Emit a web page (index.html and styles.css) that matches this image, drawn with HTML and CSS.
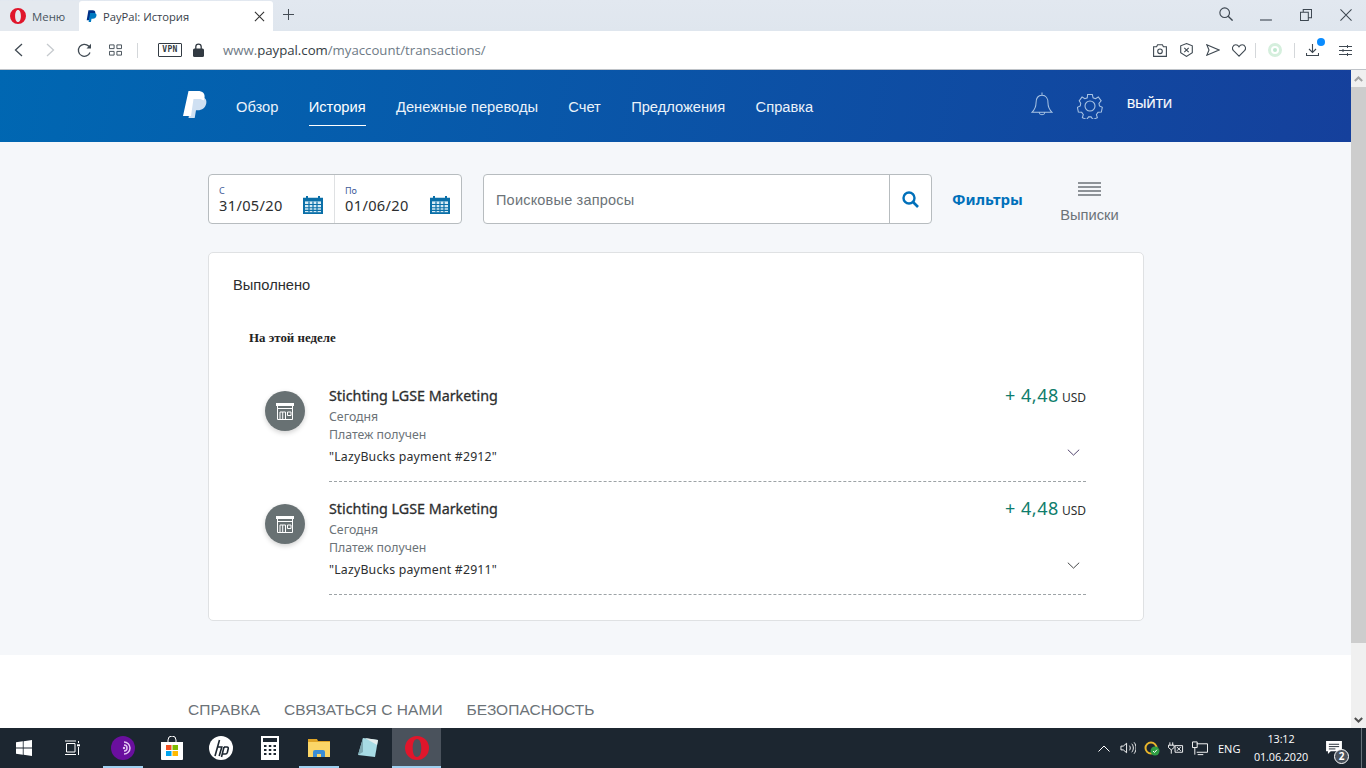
FILE: index.html
```html
<!DOCTYPE html>
<html lang="ru">
<head>
<meta charset="utf-8">
<title>PayPal: История</title>
<link rel="stylesheet" href="styles.css">
</head>
<body>
<div class="tabbar">
  <div class="menu-tab">
    <svg class="opera-sm" viewBox="0 0 16 16"><path fill="#e0162b" fill-rule="evenodd" d="M8 0a8 8 0 1 0 0 16A8 8 0 0 0 8 0zm0 2c1.9 0 2.9 2.7 2.9 6s-1 6-2.9 6-2.9-2.7-2.9-6S6.100 2 8 2z"/></svg>
    <span>Меню</span>
  </div>
  <div class="tab">
    <svg class="pp-fav" viewBox="0 0 16 18"><path fill="#003087" d="M3.500 0h6c3 0 4.500 1.600 4 4.300-.5 3-2.700 4.700-5.700 4.700H6L5 14.500H1z"/><path fill="#0079c1" d="M6 4h5.500c2.800 0 4.200 1.400 3.700 3.900-.5 2.800-2.500 4.300-5.200 4.300H8L7.200 17H3.800z"/></svg>
    <span class="tab-title">PayPal: История</span>
    <svg class="tab-x" viewBox="0 0 12 12"><path d="M1 1l10 10M11 1L1 11" stroke="#333" stroke-width="1.200" fill="none"/></svg>
  </div>
  <svg class="tab-plus" viewBox="0 0 12 12"><path d="M6 0v12M0 6h12" stroke="#444c55" stroke-width="1.100" fill="none"/></svg>
  <div class="win-ctl">
    <svg class="w-search" viewBox="0 0 16 16"><circle cx="6.500" cy="6.500" r="5.500" stroke="#3c4650" stroke-width="1.300" fill="none"/><path d="M10.500 10.500l5 5" stroke="#3c4650" stroke-width="1.600"/></svg>
    <svg class="w-min" viewBox="0 0 12 2"><path d="M0 1h12" stroke="#3c4650" stroke-width="1.100"/></svg>
    <svg class="w-max" viewBox="0 0 13 13"><path d="M.5 3.500h8.500v9H.500zM3.500 3.500V.5h9v9H9" stroke="#3c4650" stroke-width="1.100" fill="none"/></svg>
    <svg class="w-close" viewBox="0 0 13 13"><path d="M.5.5l12 12M12.500.5l-12 12" stroke="#3c4650" stroke-width="1.100" fill="none"/></svg>
  </div>
</div>
<div class="toolbar">
  <svg class="t-back" viewBox="0 0 9 14"><path d="M8 1L1.500 7 8 13" stroke="#3f4952" stroke-width="1.300" fill="none"/></svg>
  <svg class="t-fwd" viewBox="0 0 9 14"><path d="M1 1l6.500 6L1 13" stroke="#c6cace" stroke-width="1.300" fill="none"/></svg>
  <svg class="t-reload" viewBox="0 0 15 15"><path d="M13 9.500A6 6 0 1 1 11.600 3l1.800 1.500" stroke="#3f4952" stroke-width="1.300" fill="none"/><path d="M14 .8V5.500H9.500z" fill="#3f4952"/></svg>
  <svg class="t-grid" viewBox="0 0 14 12"><path d="M.5.500h5v4h-5zM8.500.500h5v4h-5zM.5 7.500h5v4h-5zM8.500 7.500h5v4h-5z" stroke="#3f4952" fill="none"/></svg>
  <span class="t-sep"></span>
  <span class="vpn">VPN</span>
  <svg class="t-lock" viewBox="0 0 11 14"><path d="M2.800 6V3.800a2.700 2.700 0 0 1 5.400 0V6" stroke="#323a42" stroke-width="1.300" fill="none"/><rect y="5.500" width="11" height="8.500" rx="1.500" fill="#323a42"/></svg>
  <div class="url"><span class="u-dim">www.</span><span class="u-dark">paypal.com</span><span class="u-dim">/myaccount/transactions/</span></div>
  <div class="t-right">
    <svg class="i-cam" viewBox="0 0 14 13"><path d="M.6 2.800h3l1-2h4.800l1 2h3v9.600H.6z" stroke="#3f4952" stroke-width="1.100" fill="none"/><circle cx="7" cy="7.300" r="2.300" stroke="#3f4952" stroke-width="1.100" fill="none"/></svg>
    <svg class="i-shield" viewBox="0 0 13 14"><path d="M6.500.6l5.800 2.200v7L6.500 13.400.7 9.800v-7z" stroke="#3f4952" stroke-width="1.100" fill="none"/><path d="M4.300 4.800l4.400 4.400M8.700 4.800L4.300 9.200" stroke="#3f4952" stroke-width="1.100"/></svg>
    <svg class="i-send" viewBox="0 0 14 12"><path d="M.8.800L13 6 .8 11.200 3 6z" stroke="#3f4952" stroke-width="1.100" fill="none"/></svg>
    <svg class="i-heart" viewBox="0 0 14 13"><path d="M7 12.200L1.500 6.700C-.7 4.300 1 .8 3.800.8 5.200.8 6.300 1.600 7 2.800 7.700 1.600 8.800.8 10.200.8c2.800 0 4.500 3.500 2.300 5.900z" stroke="#3f4952" stroke-width="1.100" fill="none"/></svg>
    <span class="t-sep2"></span>
    <svg class="i-ring" viewBox="0 0 14 14"><circle cx="7" cy="7" r="5.500" stroke="#d5efdd" stroke-width="3" fill="none"/><circle cx="7" cy="7" r="2" fill="#bfe8cf"/></svg>
    <span class="t-sep3"></span>
    <div class="dl-wrap">
      <svg class="i-dl" viewBox="0 0 13 12"><path d="M6.500 0v8M3 5l3.500 3.500L10 5M.5 9v2.500h12V9" stroke="#3f4952" stroke-width="1.100" fill="none"/></svg>
      <span class="dl-dot"></span>
    </div>
    <svg class="i-set" viewBox="0 0 13 11"><path d="M0 1.500h13M0 5.500h13M0 9.500h13" stroke="#3f4952"/><path d="M8.500 0v3M4 4v3M8.500 8v3" stroke="#3f4952"/></svg>
  </div>
</div>
<div class="viewport">
  <div class="page">
    <header class="pp-head">
      <svg class="pp-logo" viewBox="0 0 24 28"><path fill="#cfe0f2" d="M9 6h8.500c4.300 0 6.500 2.400 5.800 6.200-.8 4.500-4.200 7-8.600 7H13L11.700 27H5.500z"/><path fill="#fff" d="M5.500 0h9.300c4.800 0 7.500 2.600 6.700 7-.2 1-.6 1.900-1 2.600-1-1-2.400-1.600-4.500-1.600H10.500L8 25H0z"/></svg>
      <nav class="nav">
        <a>Обзор</a>
        <a class="active">История</a>
        <a>Денежные переводы</a>
        <a>Счет</a>
        <a>Предложения</a>
        <a>Справка</a>
      </nav>
      <svg class="h-bell" viewBox="0 0 24 26"><path d="M12 0v3M12 3c-4.500 0-6.500 3.500-6.500 8 0 4-1 7-4.500 10.500h22C19.500 18 18.500 15 18.500 11c0-4.500-2-8-6.500-8zM9 22c.5 3 5.500 3 6 0" stroke="#a9c4e4" stroke-width="1.100" fill="none"/></svg>
      <svg class="h-gear" viewBox="0 0 26 26"><circle cx="13" cy="13" r="5" stroke="#a9c4e4" stroke-width="1.100" fill="none"/><path d="M10.500 1h5l.8 3.400 2.500 1 3-1.800 3 4-2.300 2.600.5 2.800 3 1.500-1 4.900-3.500.3-1.700 2.300 1 3.300-4.600 2-2-2.800h-2.600l-2 2.800-4.600-2 1-3.300-1.700-2.300-3.500-.3-1-4.900 3-1.500.5-2.800L1.700 7.600l3-4 3 1.800 2.500-1z" transform="translate(.6 .6) scale(.95)" stroke="#a9c4e4" stroke-width="1.100" fill="none"/></svg>
      <a class="logout">ВЫЙТИ</a>
    </header>
    <main class="content">
      <div class="filters">
        <div class="dates">
          <div class="date-cell">
            <div class="date-text"><span class="date-label">С</span><span class="date-val">31/05/20</span></div>
            <svg class="cal" viewBox="0 0 20 20" preserveAspectRatio="none"><path fill="#0a6fa8" d="M0 2h3V0h2v2h10V0h2v2h3v18H0z"/><path fill="#d7ebf5" d="M2 6h16v12H2z"/><path stroke="#0a6fa8" stroke-width="1.200" d="M2 9.500h16M2 13h16M2 16h16M6 6v12M10 6v12M14 6v12"/></svg>
          </div>
          <div class="date-cell second">
            <div class="date-text"><span class="date-label">По</span><span class="date-val">01/06/20</span></div>
            <svg class="cal" viewBox="0 0 20 20" preserveAspectRatio="none"><path fill="#0a6fa8" d="M0 2h3V0h2v2h10V0h2v2h3v18H0z"/><path fill="#d7ebf5" d="M2 6h16v12H2z"/><path stroke="#0a6fa8" stroke-width="1.200" d="M2 9.500h16M2 13h16M2 16h16M6 6v12M10 6v12M14 6v12"/></svg>
          </div>
        </div>
        <div class="search">
          <span class="search-ph">Поисковые запросы</span>
          <span class="search-btn"><svg viewBox="0 0 17 17"><circle cx="7" cy="7" r="5.500" stroke="#0070ba" stroke-width="2.400" fill="none"/><path d="M11 11l5 5" stroke="#0070ba" stroke-width="2.600"/></svg></span>
        </div>
        <a class="filter-link">Фильтры</a>
        <div class="statements">
          <svg viewBox="0 0 23 14"><path d="M0 1h23M0 5h23M0 9h23M0 13h23" stroke="#6c7378" stroke-width="1.300"/></svg>
          <span>Выписки</span>
        </div>
      </div>
      <section class="card">
        <h2 class="card-title">Выполнено</h2>
        <h3 class="week">На этой неделе</h3>
        <ul class="tx-list">
          <li class="tx">
            <span class="tx-ico"><svg viewBox="0 0 18 18"><path d="M0 1h18v3H0z" fill="#fff"/><path d="M1.500 4v13.500h15V4M1 6.500h16M4 17V10h5.500v7M6.700 10v7M11.500 10h3.500v3.500h-3.500z" stroke="#fff" fill="none"/></svg></span>
            <div class="tx-main">
              <div class="tx-row">
                <div class="tx-info">
                  <div class="tx-name">Stichting LGSE Marketing</div>
                  <div class="tx-sub">Сегодня</div>
                  <div class="tx-sub second">Платеж получен</div>
                  <div class="tx-note">"LazyBucks payment #2912"</div>
                </div>
                <div class="tx-side">
                  <div class="tx-amt"><span class="plus">+ 4,48</span> <span class="cur">USD</span></div>
                  <svg class="chev" viewBox="0 0 14 8"><path d="M.5.800L7 7 13.500.8" stroke="#3a2a5a" fill="none"/></svg>
                </div>
              </div>
            </div>
          </li>
          <li class="tx">
            <span class="tx-ico"><svg viewBox="0 0 18 18"><path d="M0 1h18v3H0z" fill="#fff"/><path d="M1.500 4v13.500h15V4M1 6.500h16M4 17V10h5.500v7M6.700 10v7M11.500 10h3.500v3.500h-3.500z" stroke="#fff" fill="none"/></svg></span>
            <div class="tx-main">
              <div class="tx-row">
                <div class="tx-info">
                  <div class="tx-name">Stichting LGSE Marketing</div>
                  <div class="tx-sub">Сегодня</div>
                  <div class="tx-sub second">Платеж получен</div>
                  <div class="tx-note">"LazyBucks payment #2911"</div>
                </div>
                <div class="tx-side">
                  <div class="tx-amt"><span class="plus">+ 4,48</span> <span class="cur">USD</span></div>
                  <svg class="chev" viewBox="0 0 14 8"><path d="M.5.800L7 7 13.500.8" stroke="#2c2e2f" fill="none"/></svg>
                </div>
              </div>
            </div>
          </li>
        </ul>
      </section>
    </main>
    <footer class="foot">
      <a>СПРАВКА</a><a>СВЯЗАТЬСЯ С НАМИ</a><a>БЕЗОПАСНОСТЬ</a>
    </footer>
  </div>
  <div class="scrollbar">
    <span class="sb-btn"><svg viewBox="0 0 9 6"><path d="M.8 5L4.500 1.500 8.200 5" stroke="#a3a3a3" stroke-width="2" fill="none"/></svg></span>
    <span class="thumb"></span>
    <span class="sb-btn sb-down"><svg viewBox="0 0 9 6"><path d="M.8 1L4.500 4.500 8.200 1" stroke="#505050" stroke-width="2" fill="none"/></svg></span>
  </div>
</div>
<div class="taskbar">
  <svg class="tb-win" viewBox="0 0 16 16"><path fill="#fff" d="M0 2.300l6.800-1v6.300H0zM7.600 1.200L16 0v7.600H7.600zM0 8.400h6.800v6.300L0 13.700zM7.600 8.400H16V16l-8.400-1.200z"/></svg>
  <svg class="tb-view" viewBox="0 0 16 16"><path d="M2.500 3.500h8.500v8.500H2.500zM1 1h11M1 14.500h11M14.500 1v2M14.500 7v8" stroke="#fff" fill="none"/><rect x="13" y="4.300" width="3" height="2" fill="#fff"/></svg>
  <span class="tb-slot s-tor active-line"><svg viewBox="0 0 24 24"><circle cx="12" cy="12" r="12" fill="#6a0f9e"/><path d="M13 6a6 6 0 0 1 0 12M13 9a3 3 0 0 1 0 6" stroke="#e3c8f2" stroke-width="1.500" fill="none"/><circle cx="13" cy="12" r="1.200" fill="#e3c8f2"/></svg></span>
  <span class="tb-slot s-store"><svg viewBox="0 0 24 24"><path d="M8 7V4a4 4 0 0 1 8 0v3" stroke="#fff" fill="none"/><path d="M1 6h22v17a1 1 0 0 1-1 1H2a1 1 0 0 1-1-1z" fill="#fff"/><path fill="#f25022" d="M6 9h5.500v5H6z"/><path fill="#7fba00" d="M12.500 9H18v5h-5.500z"/><path fill="#00a4ef" d="M6 15h5.500v5H6z"/><path fill="#ffb900" d="M12.500 15H18v5h-5.500z"/></svg></span>
  <span class="tb-slot s-hp"><svg viewBox="0 0 24 24"><circle cx="12" cy="12" r="12" fill="#fff"/><path d="M10.500 4L6 20M8.700 11h4.100L10.200 20M15 11h3c1 0 1.500.7 1.200 1.800l-.8 3.400c-.3 1-1 1.800-2 1.800h-2.500M15 11l-2.500 10" stroke="#1c2630" stroke-width="1.600" fill="none"/></svg></span>
  <span class="tb-slot s-calc"><svg viewBox="0 0 18 24"><path fill="#fff" d="M0 0h18v24H0z"/><path fill="#1c2630" d="M2 2h14v4H2zM3 9h2.500v2H3zM7.800 9h2.500v2H7.800zM12.500 9H15v2h-2.500zM3 13h2.500v2H3zM7.800 13h2.500v2H7.800zM12.500 13H15v2h-2.500zM3 17h2.500v2H3zM7.800 17h2.500v2H7.800zM12.500 17H15v2h-2.500z"/></svg></span>
  <span class="tb-slot s-files active-line"><svg viewBox="0 0 22 20"><path fill="#e0a526" d="M0 1h9l1 2h12v4H0z"/><path fill="#fbd667" d="M0 4h22v15H0z"/><path fill="#3b8ed6" d="M5 19v-5a2 2 0 0 1 2-2h8a2 2 0 0 1 2 2v5h-4v-3H9v3z"/></svg></span>
  <span class="tb-slot s-note"><svg viewBox="0 0 22 22"><path fill="#a7dbe4" d="M6 1l15 2-3 17L1 18z"/><path fill="#7ea9b2" d="M6 1L1 18l5-3z"/><path fill="#e4ecec" d="M8 1l13 2-1 5z"/></svg></span>
  <span class="tb-slot s-opera active-line is-open"><svg viewBox="0 0 24 24"><path fill="#e0162b" fill-rule="evenodd" d="M12 0a12 12 0 1 0 0 24 12 12 0 0 0 0-24zm0 3c2.900 0 4.300 4 4.300 9s-1.400 9-4.300 9-4.300-4-4.300-9 1.400-9 4.300-9z"/></svg></span>
  <div class="tray">
    <svg class="tr-up" viewBox="0 0 12 7"><path d="M.5 6.500L6 1l5.500 5.500" stroke="#fff" fill="none"/></svg>
    <svg class="tr-vol" viewBox="0 0 17 14"><path d="M1 5h2.500L7 2v10L3.500 9H1zM10 4.500c1.200 1.500 1.200 3.500 0 5M12.500 2.500c2.200 2.600 2.200 6.400 0 9M15 1c2.700 3.500 2.700 8.500 0 12" stroke="#fff" fill="none"/></svg>
    <svg class="tr-norton" viewBox="0 0 16 16"><circle cx="7" cy="8" r="5.500" stroke="#e9b52c" stroke-width="2" fill="none"/><circle cx="11" cy="11" r="4.500" fill="#2f9e44"/><path d="M9 11l1.500 1.500L13 9.700" stroke="#fff" fill="none"/></svg>
    <svg class="tr-power" viewBox="0 0 17 14"><path d="M2 1v3M5 1v3M.5 4h6v2.500L3.500 9 .5 6.500zM3.500 9v4" stroke="#fff" fill="none"/><path d="M7.500 4.500h8v7h-8zM9.500 6l4 4M13.500 6l-4 4" stroke="#fff" fill="none"/></svg>
    <svg class="tr-net" viewBox="0 0 17 15"><path d="M5 2.500h11.500v9H5M.5.500h5v6h-5zM3 6.500V14M6 14h6" stroke="#fff" fill="none"/></svg>
    <span class="tr-lang">ENG</span>
    <div class="tr-clock"><span>13:12</span><span>01.06.2020</span></div>
    <div class="tr-notif">
      <svg viewBox="0 0 17 15"><path fill="#fff" d="M0 0h17v11H5l-3 3v-3H0z"/><path stroke="#1c2630" d="M3 3.500h11M3 6h11M3 8.500h7"/></svg>
      <span class="tr-badge">2</span>
    </div>
    <span class="tr-desktop"></span>
  </div>
</div>
</body>
</html>
```
FILE: styles.css
```css
* { box-sizing: border-box; }
html, body { margin: 0; padding: 0; height: 768px; overflow: hidden; }
body { display: flex; flex-direction: column; width: 1366px; font-family: "Open Sans", sans-serif; background: #fff; }
svg { display: block; flex: none; }
ul { list-style: none; margin: 0; padding: 0; }
h2, h3 { margin: 0; font-weight: normal; }

/* browser tab strip */
.tabbar { height: 31px; flex: none; display: flex; align-items: flex-end; background: linear-gradient(#e2e8f0, #dfe6ee); position: relative; }
.menu-tab { width: 79px; height: 30px; display: flex; align-items: center; padding-left: 10px; gap: 6px; font-size: 11.400px; color: #4a5560; background: #e4e9ef; }
.opera-sm { width: 16px; height: 16px; }
.tab { width: 194px; height: 30px; background: #fff; border-radius: 3px 3px 0 0; display: flex; align-items: center; padding-left: 7px; font-size: 11.200px; color: #39424b; }
.pp-fav { width: 11px; height: 13px; margin-right: 6px; }
.tab-title { flex: 1; }
.tab-x { width: 11px; height: 11px; margin-right: 8px; }
.tab-plus { width: 11px; height: 11px; margin: 0 0 11px 10px; }
.win-ctl { margin-left: auto; height: 31px; position: relative; width: 150px; }
.w-search { width: 14px; height: 14px; position: absolute; left: 3px; top: 7px; }
.w-min { width: 12px; height: 2px; position: absolute; left: 44px; top: 19px; }
.w-max { width: 12px; height: 12px; position: absolute; left: 84px; top: 9px; }
.w-close { width: 12px; height: 12px; position: absolute; left: 124px; top: 9px; }

/* browser toolbar */
.toolbar { height: 39px; flex: none; display: flex; align-items: center; background: #fff; border-bottom: 1px solid #bfc3c8; padding-left: 14px; }
.t-back { width: 9px; height: 14px; }
.t-fwd { width: 9px; height: 14px; margin-left: 23px; }
.t-reload { width: 15px; height: 15px; margin-left: 22px; }
.t-grid { width: 13px; height: 12px; margin-left: 17px; }
.t-sep { width: 1px; height: 15px; background: #d4d7da; margin-left: 15px; }
.vpn { width: 24px; height: 14px; border: 1px solid #333b43; border-radius: 1px; margin-left: 20px; font: bold 8px/12px "DejaVu Sans Mono", monospace; letter-spacing: .3px; text-align: center; color: #333b43; }
.t-lock { width: 11px; height: 14px; margin-left: 11px; }
.url { margin-left: 19px; font-size: 13.200px; color: #6e7a86; }
.u-dark { color: #343c44; }
.t-right { margin-left: auto; display: flex; align-items: center; padding-right: 14px; }
.i-cam { width: 14px; height: 13px; }
.i-shield { width: 13px; height: 14px; margin-left: 13px; }
.i-send { width: 14px; height: 12px; margin-left: 13px; }
.i-heart { width: 14px; height: 13px; margin-left: 12px; }
.t-sep2 { width: 1px; height: 15px; background: #d4d7da; margin-left: 9px; }
.i-ring { width: 14px; height: 14px; margin-left: 12px; }
.t-sep3 { width: 1px; height: 15px; background: #d4d7da; margin-left: 12px; }
.dl-wrap { position: relative; margin-left: 11px; }
.i-dl { width: 13px; height: 12px; }
.dl-dot { position: absolute; width: 8px; height: 8px; border-radius: 50%; background: #0a8cff; left: 11px; top: -6px; }
.i-set { width: 13px; height: 11px; margin-left: 20px; }

/* page */
.viewport { flex: 1; display: flex; min-height: 0; overflow: hidden; }
.page { flex: 1; min-width: 0; display: flex; flex-direction: column; background: #f5f7fa; }
.pp-head { height: 72px; flex: none; display: flex; align-items: center; position: relative; background: linear-gradient(100deg, #0067b2, #15409c); padding-left: 183px; }
.pp-logo { width: 24px; height: 28px; margin-top: -2px; }
.nav { display: flex; margin-left: 29px; height: 100%; gap: 30.300px; font-family: "Liberation Sans", sans-serif; font-size: 14.700px; color: #eaf2fa; }
.nav a { display: block; padding-top: 29px; height: 56px; line-height: 17px; }
.nav a.active { border-bottom: 1px solid #fff; color: #fff; }
.h-bell { width: 22px; height: 25px; position: absolute; left: 1031px; top: 22px; }
.h-gear { width: 26px; height: 26px; position: absolute; left: 1077px; top: 23px; }
.logout { position: absolute; left: 1127px; top: 26px; font: 12.500px/16px "Liberation Sans", sans-serif; color: #fff; -webkit-text-stroke: .2px #fff; }

.content { height: 513px; flex: none; padding: 32px 0 0 208px; }
.filters { display: flex; align-items: flex-start; height: 50px; }
.dates { width: 254px; height: 50px; border: 1px solid #b7bcbf; border-radius: 4px; background: #fff; display: flex; }
.date-cell { width: 125px; flex: none; display: flex; justify-content: space-between; padding: 10px 11px 0 10px; }
.date-cell.second { width: 127px; border-left: 1px solid #dfe1e3; }
.date-text { display: flex; flex-direction: column; }
.date-label { font: 9px/12px "Noto Sans", sans-serif; color: #3d5a98; }
.date-val { font: 14.600px/16px "Noto Sans", sans-serif; letter-spacing: .35px; color: #2c2e2f; }
.cal { width: 20px; height: 18px; margin-top: 11px; }
.search { width: 449px; height: 50px; margin-left: 21px; border: 1px solid #b7bcbf; border-radius: 4px; background: #fff; display: flex; align-items: center; justify-content: space-between; padding-left: 12px; }
.search-ph { font: 14.500px/18px "Liberation Sans", sans-serif; letter-spacing: .2px; color: #6c7378; padding-top: 1px; }
.search-btn { width: 42px; height: 100%; border-left: 1px solid #b7bcbf; display: flex; align-items: center; justify-content: center; }
.search-btn svg { width: 17px; height: 17px; }
.filter-link { margin: 16px 0 0 20px; font: bold 15px/18px "Noto Sans", sans-serif; color: #0070ba; }
.statements { width: 61px; margin: 8px 0 0 36px; display: flex; flex-direction: column; align-items: center; font: 14.700px/16px "Liberation Sans", sans-serif; color: #6c7378; }
.statements svg { width: 23px; height: 14px; margin-bottom: 11px; }

.card { width: 936px; height: 369px; margin-top: 28px; background: #fff; border: 1px solid #dfe1e3; border-radius: 5px; padding: 24px 24px 0; }
.card-title { font: 14.700px/17px "Liberation Sans", sans-serif; color: #2c2e2f; }
.week { margin: 37px 0 0 16px; font: bold 12.900px/15px "Liberation Serif", serif; color: #222; }
.tx-list { margin-top: 34px; padding: 0 33px 0 32px; }
.tx { display: flex; height: 113px; }
.tx-ico { width: 40px; height: 40px; margin-top: 11px; border-radius: 50%; background: #687173; box-shadow: 0 2px 5px rgba(0,0,0,.18); display: flex; align-items: center; justify-content: center; }
.tx-ico svg { width: 18px; height: 18px; }
.tx-main { flex: 1; margin-left: 24px; }
.tx-row { display: flex; justify-content: space-between; height: 102px; padding-top: 7px; border-bottom: 1px dashed #9da3a6; }
.tx-name { font: 14.300px/18px "Noto Sans", sans-serif; -webkit-text-stroke: .3px #2c2e2f; color: #2c2e2f; }
.tx-sub { font: 12.300px/16px "Noto Sans", sans-serif; color: #6c7378; margin-top: 4px; }
.tx-sub.second { margin-top: 2px; }
.tx-note { font: 12.300px/16px "Noto Sans", sans-serif; color: #2c2e2f; margin-top: 6px; letter-spacing: .2px; }
.tx-side { display: flex; flex-direction: column; align-items: flex-end; }
.tx-amt { font: 12px/20px "Noto Sans", sans-serif; color: #2c2e2f; white-space: nowrap; margin-top: -2px; }
.plus { font-size: 18px; letter-spacing: .5px; color: #0f7d6c; }
.chev { width: 13px; height: 7px; margin: 41px 6px 0 0; }

.foot { flex: 1; background: #fff; display: flex; gap: 24px; padding: 46px 0 0 188px; font: 15.500px/18px "Liberation Sans", sans-serif; letter-spacing: .05px; color: #6c7378; }
.scrollbar { width: 15px; flex: none; background: #f0f0f0; display: flex; flex-direction: column; }
.sb-btn { height: 17px; flex: none; display: flex; align-items: center; justify-content: center; }
.sb-btn svg { width: 9px; height: 6px; }
.sb-down { margin-top: auto; }
.thumb { height: 556px; flex: none; background: #cdcdcd; }

/* taskbar */
.taskbar { height: 40px; flex: none; display: flex; align-items: center; background: #1c2630; color: #fff; }
.tb-win { width: 16px; height: 16px; margin-left: 16px; }
.tb-view { width: 16px; height: 16px; margin-left: 32px; margin-right: 18px; }
.tb-slot { width: 49px; height: 40px; display: flex; align-items: center; justify-content: center; position: relative; }
.active-line::after { content: ""; position: absolute; left: 5px; right: 4px; bottom: 0; height: 2px; background: #9fd0f0; }
.is-open { background: #4a525c; }
.is-open::after { left: 0; right: 0; }
.tb-slot svg { width: 24px; height: 24px; }
.s-calc svg { width: 18px; height: 24px; }
.s-files svg { width: 22px; height: 20px; }
.s-note svg { width: 22px; height: 22px; }
.tray { margin-left: auto; display: flex; align-items: center; height: 40px; padding-right: 4px; }
.tr-up { width: 12px; height: 7px; }
.tr-vol { width: 16px; height: 14px; margin-left: 10px; }
.tr-norton { width: 16px; height: 16px; margin-left: 8px; }
.tr-power { width: 16px; height: 14px; margin-left: 8px; }
.tr-net { width: 16px; height: 15px; margin-left: 8px; }
.tr-lang { font-size: 11px; width: 23px; margin-left: 10px; white-space: nowrap; }
.tr-clock { width: 54px; display: flex; flex-direction: column; align-items: center; font-size: 10.800px; line-height: 18px; letter-spacing: -.1px; margin-left: 13px; white-space: nowrap; }
.tr-notif { position: relative; margin-left: 18px; }
.tr-notif svg { width: 16px; height: 14px; }
.tr-badge { position: absolute; left: 8px; top: 8px; width: 15px; height: 15px; border-radius: 50%; background: #4a525c; border: 1px solid #fff; font: bold 10px/13px "Open Sans", sans-serif; text-align: center; }
.tr-desktop { width: 1px; height: 40px; background: #667078; margin-left: 19px; }
```
